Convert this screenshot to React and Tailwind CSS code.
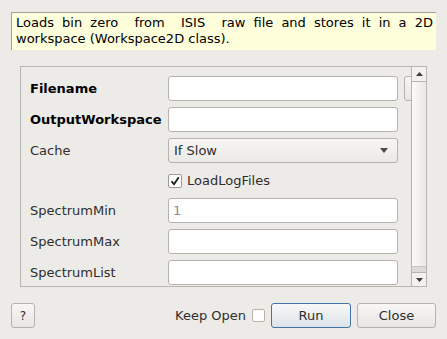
import React from "react";

const font = { fontFamily: '"DejaVu Sans", sans-serif' };

function Field({ label, bold, children }) {
  return (
    <>
      <div
        className={`flex items-center h-[25px] text-[13px] text-[#2e2e2e] ${
          bold ? "font-bold text-black" : ""
        }`}
      >
        {label}
      </div>
      <div className="flex items-center gap-[6px]">{children}</div>
    </>
  );
}

function TextBox({ value, placeholder }) {
  return (
    <div className="w-[230px] h-[25px] shrink-0 bg-white border border-[#b6b3ae] rounded-[3px] flex items-center px-[4px] text-[13px] text-[#2e2e2e]">
      {value}
      {placeholder && <span className="text-[#8c8c8c]">{placeholder}</span>}
    </div>
  );
}

export default function App() {
  return (
    <div
      className="w-[447px] h-[339px] bg-[#edebe8] relative overflow-hidden"
      style={font}
    >
      <div className="pt-[12px] px-[11px]">
        <div className="h-[38px] bg-[#ffffdc] border-l border-t border-[#a0a0a0] border-r-[#f4f4f4] border-b-[#f4f4f4] pl-[4px] pr-[3px] pt-[2px] text-[13px] leading-[16px] text-black text-justify">
          Loads bin zero&nbsp; from&nbsp; ISIS&nbsp; raw file and stores it in a 2D
          workspace (Workspace2D class).
        </div>
      </div>

      <div className="mt-[16px] ml-[20px] w-[407px] h-[221px] border border-[#b8b5b0] flex">
        <div className="flex-1 overflow-hidden pt-[9px] pl-[9px]">
          <div className="grid grid-cols-[132px_auto] gap-x-[6px] gap-y-[6px] w-[420px]">
            <Field label="Filename" bold>
              <TextBox />
              <div className="w-[30px] h-[25px] shrink-0 rounded-[3px] border border-[#b6b3ae] bg-gradient-to-b from-[#f6f5f4] to-[#e8e6e3]" />
            </Field>
            <Field label="OutputWorkspace" bold>
              <TextBox />
            </Field>
            <Field label="Cache">
              <div className="w-[230px] h-[25px] shrink-0 border border-[#b6b3ae] rounded-[3px] bg-gradient-to-b from-[#f8f7f6] to-[#ebe9e6] flex items-center justify-between pl-[5px] pr-[9px] text-[13px] text-[#2e2e2e]">
                <span>If Slow</span>
                <svg width="8" height="5" viewBox="0 0 8 5">
                  <path d="M0 0H8L4 5Z" fill="#4a4a4a" />
                </svg>
              </div>
            </Field>
            <div className="h-[23px]" />
            <div className="flex items-center h-[23px] gap-[5px] text-[13px] text-[#2e2e2e]">
              <div className="w-[14px] h-[14px] bg-white border border-[#9e9b97] rounded-[2px] flex items-center justify-center">
                <svg width="10" height="10" viewBox="0 0 10 10">
                  <path
                    d="M1.5 5.2L4 8.3L8.7 1.2"
                    fill="none"
                    stroke="#1c1c1c"
                    strokeWidth="1.8"
                  />
                </svg>
              </div>
              <span>LoadLogFiles</span>
            </div>
            <Field label="SpectrumMin">
              <TextBox placeholder="1" />
            </Field>
            <Field label="SpectrumMax">
              <TextBox />
            </Field>
            <Field label="SpectrumList">
              <TextBox />
            </Field>
          </div>
        </div>

        <div className="w-[15px] h-full border-l border-[#b8b5b0] flex flex-col bg-gradient-to-r from-[#fafafa] to-[#ebe9e6]">
          <div className="h-[15px] border-b border-[#b8b5b0] flex items-center justify-center bg-[#f2f1ef]">
            <svg width="7" height="4" viewBox="0 0 7 4">
              <path d="M0 4H7L3.5 0Z" fill="#3c3c3c" />
            </svg>
          </div>
          <div className="flex-1" />
          <div className="h-[6px] bg-[#dcdad6] border-t border-[#c8c5c0]" />
          <div className="h-[14px] border-t border-[#b8b5b0] flex items-center justify-center bg-[#f2f1ef]">
            <svg width="7" height="4" viewBox="0 0 7 4">
              <path d="M0 0H7L3.5 4Z" fill="#3c3c3c" />
            </svg>
          </div>
        </div>
      </div>

      <div className="mt-[16px] px-[11px] flex items-center h-[25px]">
        <div className="w-[24px] h-[25px] border border-[#b6b3ae] rounded-[3px] bg-gradient-to-b from-[#f8f7f6] to-[#e8e6e3] flex items-center justify-center text-[12px] text-[#2e2e2e]">
          ?
        </div>
        <div className="flex-1" />
        <span className="text-[13px] text-[#2e2e2e] mr-[6px]">Keep Open</span>
        <div className="w-[13px] h-[13px] bg-white border border-[#b6b3ae] rounded-[2px] mr-[6px]" />
        <div className="w-[80px] h-[25px] border border-[#3f76a8] rounded-[3px] bg-gradient-to-b from-[#f8f8f8] to-[#dde3e8] flex items-center justify-center text-[13px] text-[#2e2e2e]">
          Run
        </div>
        <div className="w-[79px] h-[25px] ml-[6px] border border-[#b6b3ae] rounded-[3px] bg-gradient-to-b from-[#f8f7f6] to-[#e8e6e3] flex items-center justify-center text-[13px] text-[#2e2e2e]">
          Close
        </div>
      </div>
    </div>
  );
}
